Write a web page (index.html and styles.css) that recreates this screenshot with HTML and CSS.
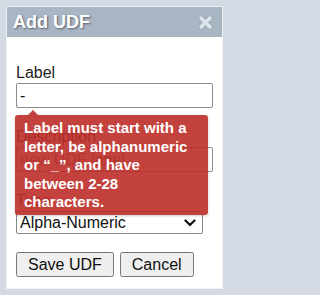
FILE: index.html
```html
<!DOCTYPE html>
<html lang="en">
<head>
<meta charset="utf-8">
<title>Add UDF</title>
<link rel="stylesheet" href="styles.css">
</head>
<body>
<div class="dialog">
  <div class="titlebar">
    <span class="title">Add UDF</span>
    <span class="close" aria-label="Close">
      <svg width="15" height="15" viewBox="0 0 15 15"><path d="M3 3 L12 12 M12 3 L3 12" stroke="#dfe5ec" stroke-width="3.4" stroke-linecap="round"/></svg>
    </span>
  </div>
  <form class="body">
    <div class="field field-first">
      <label class="label" for="udf-label">Label</label>
      <input class="input" id="udf-label" type="text" value="-">
      <div class="tooltip">Label must start with a letter, be alphanumeric or “_”, and have between 2-28 characters.</div>
    </div>
    <div class="field">
      <label class="label" for="udf-desc">Description</label>
      <input class="input" id="udf-desc" type="text" placeholder="new UDF label">
    </div>
    <div class="field">
      <label class="label" for="udf-type">Type</label>
      <div class="select-wrap">
        <select class="select" id="udf-type">
          <option>Alpha-Numeric</option>
        </select>
        <svg class="chevron" width="12" height="8" viewBox="0 0 12 8"><path d="M1.5 1.5 L6 6 L10.5 1.5" fill="none" stroke="#111" stroke-width="2.2" stroke-linecap="round" stroke-linejoin="round"/></svg>
      </div>
    </div>
    <div class="actions">
      <button type="button" class="btn">Save UDF</button>
      <button type="button" class="btn">Cancel</button>
    </div>
  </form>
</div>
</body>
</html>
```
FILE: styles.css
```css
html {
  background: #d3dae3;
}
html, body {
  margin: 0;
  padding: 0;
}
body {
  background: #d3dae3;
  font-family: "Liberation Sans", Arial, sans-serif;
  width: 229px;
  height: 295px;
  padding: 6px;
  box-sizing: border-box;
  overflow: hidden;
}
.dialog {
  border: 1px solid #eef1f5;
  background: #ffffff;
  height: 283px;
  box-sizing: border-box;
}
.titlebar {
  height: 30px;
  background: #a9b5c3;
  display: flex;
  align-items: center;
  justify-content: space-between;
  padding: 0 9px 0 6px;
}
.title {
  color: #ffffff;
  font-weight: bold;
  font-size: 18px;
  text-shadow: 1px 1px 2px rgba(40, 50, 70, 0.65);
  line-height: 20px;
}
.close {
  display: flex;
  width: 15px;
  height: 15px;
  filter: drop-shadow(0 0 1px rgba(120, 130, 150, 0.4));
}
.body {
  padding: 27px 9px 0 9px;
  margin: 0;
}
.field {
  display: flex;
  flex-direction: column;
  align-items: flex-start;
  margin-top: 20px;
}
.field-first {
  margin-top: 0;
  position: relative;
}
.label {
  font-size: 16px;
  line-height: 18px;
  color: #222222;
  margin-bottom: 1px;
}
.input {
  width: 197px;
  height: 25px;
  box-sizing: border-box;
  border: 1px solid #8c8c8c;
  border-radius: 2px;
  padding: 1px 3px;
  font-family: "Liberation Sans", Arial, sans-serif;
  font-size: 16px;
  color: #111111;
  background: #ffffff;
  margin: 0;
}
.input::placeholder {
  color: #757575;
}
.select-wrap {
  position: relative;
  display: flex;
}
.select {
  appearance: none;
  -webkit-appearance: none;
  width: 187px;
  height: 23px;
  box-sizing: border-box;
  border: 1px solid #858585;
  border-radius: 2px;
  background: #ffffff;
  padding: 0 20px 0 3px;
  font-family: "Liberation Sans", Arial, sans-serif;
  font-size: 16px;
  color: #111111;
  margin: 0;
}
.chevron {
  position: absolute;
  right: 7px;
  top: 8px;
  pointer-events: none;
}
.tooltip {
  position: absolute;
  top: calc(100% + 7px);
  left: -1px;
  width: 193px;
  box-sizing: border-box;
  padding: 4px 9px 3px 9px;
  background: rgba(189, 46, 41, 0.9);
  color: #ffffff;
  font-weight: bold;
  font-size: 15px;
  line-height: 18.6px;
  border-radius: 3px;
  box-shadow: 0 1px 3px rgba(0, 0, 0, 0.2);
  z-index: 2;
}
.tooltip::before {
  content: "";
  position: absolute;
  top: -5px;
  left: 13px;
  border-left: 5px solid transparent;
  border-right: 5px solid transparent;
  border-bottom: 5px solid rgba(189, 46, 41, 0.9);
}
.actions {
  display: flex;
  gap: 6px;
  margin-top: 18px;
}
.btn {
  font-family: "Liberation Sans", Arial, sans-serif;
  font-size: 16px;
  padding: 2px 10px;
  height: 25px;
  color: #111111;
  margin: 0;
}
```
